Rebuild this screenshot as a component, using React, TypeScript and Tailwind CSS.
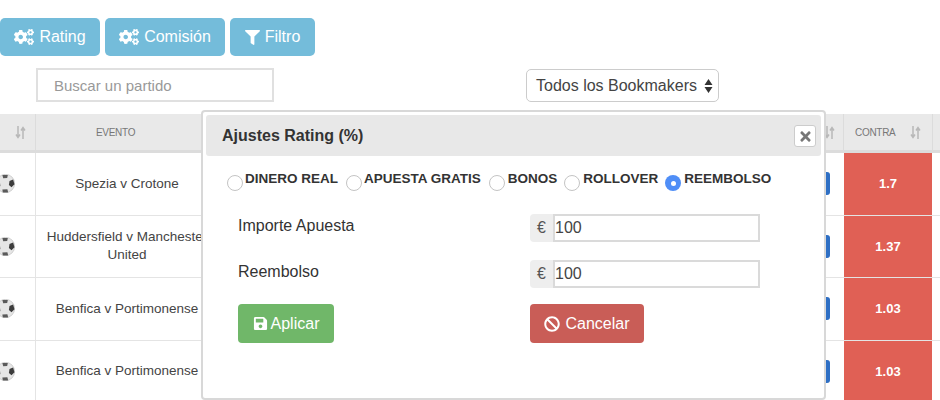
import { FaBan, FaCogs, FaFilter, FaSave, FaTimes } from 'react-icons/fa'

const rows = [
  { id: 1, event: 'Spezia v Crotone', odds: '1.7' },
  { id: 2, event: 'Huddersfield v Manchester United', odds: '1.37' },
  { id: 3, event: 'Benfica v Portimonense', odds: '1.03' },
  { id: 4, event: 'Benfica v Portimonense', odds: '1.03' },
]

const radios = [
  { label: 'DINERO REAL', gap: 'mr-2', labelGap: 'gap-[2px]' },
  { label: 'APUESTA GRATIS', gap: 'mr-2', labelGap: 'gap-[2px]' },
  { label: 'BONOS', gap: 'mr-[7px]', labelGap: 'gap-[3px]' },
  { label: 'ROLLOVER', gap: 'mr-[7px]', labelGap: 'gap-[3px]' },
  { label: 'REEMBOLSO', gap: '', labelGap: 'gap-[3px]', checked: true },
]

function SortIcon() {
  return (
    <svg width="11" height="13" viewBox="0 0 11 13" fill="none" stroke="#b8b8b8" strokeWidth="1.5">
      <path d="M3 0v11M1 8.5 3 11.5 5 8.5" />
      <path d="M8 13V2M6 4.5 8 1.5 10 4.5" />
    </svg>
  )
}

function SoccerBall() {
  return (
    <svg width="19" height="19" viewBox="0 0 19 19">
      <circle cx="9.5" cy="9.5" r="9.2" fill="#e6e6e6" stroke="#b0b0b0" strokeWidth="0.5" />
      <path d="M13.5 7l3.6-1.4 1.4 4.6-3 3-2.6-2.2z" fill="#3c3c3c" />
      <path d="M6.4 1h5.4l-.6 3-4 .2z" fill="#5a5a5a" />
      <path d="M.8 7l3 .6L4.4 12 1.6 13.4z" fill="#4a4a4a" />
      <path d="M6.4 15.4l5-.2.8 3.2-5.4.2z" fill="#5a5a5a" />
    </svg>
  )
}

function ActionButton({ icon, label, className }: { icon: React.ReactNode; label: string; className: string }) {
  return (
    <button className={`flex h-[38px] items-center justify-center gap-[5px] rounded-[5px] bg-[#74bcda] text-[16px] text-white ${className}`}>
      {icon}
      <span>{label}</span>
    </button>
  )
}

function MoneyInput() {
  return (
    <div className="flex h-[28px] w-[230px]">
      <span className="flex w-[23px] items-center justify-center rounded-l-[4px] bg-[#eeeeee] text-[16px] text-[#555]">€</span>
      <input
        readOnly
        value="100"
        className="w-[207px] border-2 border-[#dadada] bg-white text-[16px] text-[#444] outline-none"
      />
    </div>
  )
}

function RatingModal() {
  return (
    <div className="absolute left-[201px] top-[110px] h-[290px] w-[625px] rounded-[4px] border-2 border-[#d8d8d8] bg-white p-[3px]">
      {/* Header */}
      <div className="flex h-[41px] items-center justify-between rounded-[3px] bg-[#e8e8e8] pl-[16px] pr-[5px]">
        <h4 className="text-[16px] font-bold text-[#333]">Ajustes Rating (%)</h4>
        <button className="mt-[1px] flex h-[22px] w-[22px] items-center justify-center rounded-[3px] border border-[#ccc] bg-white text-[15px] text-[#777]">
          <FaTimes />
        </button>
      </div>

      {/* Radios */}
      <div className="ml-[21px] mt-[15px] flex items-start">
        {radios.map((radio) => (
          <label key={radio.label} className={`flex items-start ${radio.labelGap} ${radio.gap}`}>
            <span
              className={
                radio.checked
                  ? 'mt-[4px] flex h-[16px] w-[16px] items-center justify-center rounded-full bg-[#4f8ef7]'
                  : 'mt-[4px] h-[16px] w-[16px] rounded-full border border-[#c4c4c4] bg-white'
              }
            >
              {radio.checked && <span className="h-[5px] w-[5px] rounded-full bg-white" />}
            </span>
            <span className="text-[13.5px] font-bold leading-[16px] text-[#333]">{radio.label}</span>
          </label>
        ))}
      </div>

      {/* Form */}
      <div className="ml-[32px] mt-[23px] grid grid-cols-[292px_230px] gap-y-[18px] text-[16px] text-[#333]">
        <span className="leading-[24px]">Importe Apuesta</span>
        <MoneyInput />
        <span className="leading-[24px]">Reembolso</span>
        <MoneyInput />
        <button className="mt-[-2px] flex h-[39px] w-[96px] items-center justify-center gap-[3px] rounded-[4px] bg-[#70b769] text-white">
          <FaSave className="text-[15px]" />
          Aplicar
        </button>
        <button className="mt-[-2px] flex h-[39px] w-[114px] items-center justify-center gap-[5px] rounded-[4px] bg-[#c95d57] text-white">
          <FaBan className="text-[16px]" />
          Cancelar
        </button>
      </div>
    </div>
  )
}

export default function App() {
  return (
    <div className='relative h-[400px] w-[940px] overflow-hidden bg-white font-["Liberation_Sans",Arial,sans-serif]'>
      {/* Toolbar */}
      <div className="flex gap-[5px] pt-[18px]">
        <ActionButton icon={<FaCogs className="text-[20px]" />} label="Rating" className="w-[100px]" />
        <ActionButton icon={<FaCogs className="text-[20px]" />} label="Comisión" className="w-[120px]" />
        <ActionButton icon={<FaFilter className="text-[15px]" />} label="Filtro" className="w-[85px]" />
      </div>

      {/* Filters */}
      <div className="mt-[12px] flex items-start pl-[36px]">
        <input
          placeholder="Buscar un partido"
          className="h-[34px] w-[238px] border-2 border-[#e0e0e0] pl-[16px] text-[15px] outline-none placeholder:text-[#999]"
        />
        <div className="ml-[252px] mt-[1px] flex h-[33px] w-[193px] items-center justify-between rounded-[5px] border border-[#ccc] pl-[9px] pr-[5px] text-[16px] text-[#444]">
          <span>Todos los Bookmakers</span>
          <svg width="9" height="16" viewBox="0 0 9 16" fill="#333">
            <path d="M4.5 1 8.5 7H.5zM4.5 15 .5 9h8z" />
          </svg>
        </div>
      </div>

      {/* Odds table */}
      <div className="mt-[12px] grid grid-cols-[36px_182px_626px_88px_8px] text-[13.5px] text-[#444]">
        <div className="flex h-[39px] items-center justify-end border-b-[3px] border-r border-[#dcdcdc] bg-[#e9e9e9] pr-[9px]">
          <SortIcon />
        </div>
        <div className="flex h-[39px] items-center border-b-[3px] border-[#dcdcdc] bg-[#e9e9e9] pl-[60px] text-[10px] tracking-[-0.3px] text-[#777]">
          EVENTO
        </div>
        <div className="flex h-[39px] items-center justify-end border-b-[3px] border-r border-[#dcdcdc] bg-[#e9e9e9] pr-[8px]">
          <SortIcon />
        </div>
        <div className="flex h-[39px] items-center justify-between border-b-[3px] border-[#dcdcdc] bg-[#e9e9e9] pl-[11px] pr-[11px] text-[10px] tracking-[-0.3px] text-[#777]">
          CONTRA
          <SortIcon />
        </div>
        <div className="h-[39px] border-b-[3px] border-l border-[#dcdcdc] bg-[#e9e9e9]" />

        {rows.map((row) => (
          <div key={row.id} className="col-span-5 grid h-[62.5px] grid-cols-[36px_182px_626px_88px_8px] border-b border-[#e4e4e4]">
            <div className="flex items-center border-r border-[#e4e4e4]">
              <span className="-ml-[4px]">
                <SoccerBall />
              </span>
            </div>
            <div className="flex items-center justify-center px-[8px] text-center leading-[18px]">{row.event}</div>
            <div className="flex items-center justify-end pr-[14px]">
              <span className="h-[23px] w-[6px] rounded-r-[3px] bg-[#2e6fc4]" />
            </div>
            <div className="flex items-center justify-center bg-[#e06055] text-[13px] font-bold text-white">{row.odds}</div>
            <div />
          </div>
        ))}
      </div>

      <RatingModal />
    </div>
  )
}
